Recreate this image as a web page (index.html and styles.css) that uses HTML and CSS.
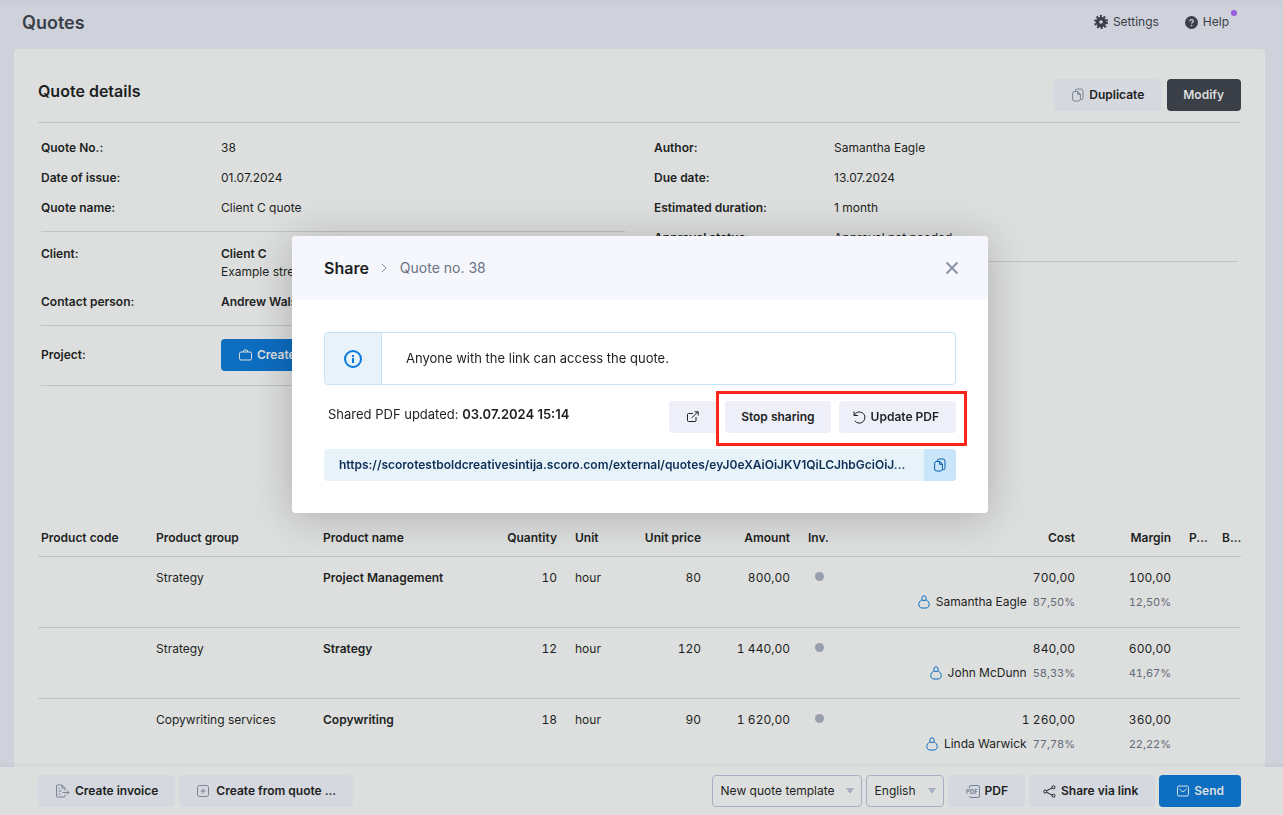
FILE: index.html
```html
<!DOCTYPE html>
<html lang="en">
<head>
  <meta charset="UTF-8" />
  <meta name="viewport" content="width=device-width, initial-scale=1.0"/>
  <title>Quotes</title>
  <link rel="stylesheet" href="styles.css">
</head>
<body>
  <!-- Shared icons -->
  <svg class="sprite" width="0" height="0" aria-hidden="true">
    <symbol id="icon-copy" viewBox="0 0 12 14">
      <path d="M3.500 3.500H5.800L8.400 6V11a2 2 0 0 1-2 2H2.600a2 2 0 0 1-2-2V5.500a2 2 0 0 1 2-2H4M5.600 3.700V6.400H8.300M3.200 3.300V3a2 2 0 0 1 2-2H9a2 2 0 0 1 2 2V9.800a2 2 0 0 1-2 2M5 3.300L8.500 6.500"/>
    </symbol>
    <symbol id="icon-person" viewBox="0 0 12 14">
      <path d="M4 4.800V2.800a2 2 0 0 1 4 0V4.800M4 4.800C2 5.800.8 7.600.8 9.400c0 2.400 1.400 3.600 3.200 3.600h4c1.800 0 3.200-1.200 3.200-3.600C11.200 7.600 10 5.800 8 4.800M4 4.800c.9 1 3.100 1 4 0"/>
    </symbol>
  </svg>

  <header class="topbar">
    <h1>Quotes</h1>
    <nav class="topnav">
      <a href="#settings">
        <svg width="14" height="14" viewBox="0 0 14 14"><circle cx="7" cy="7" r="3.500" fill="none" stroke="currentColor" stroke-width="3.400"/><circle cx="7" cy="7" r="6" fill="none" stroke="currentColor" stroke-width="2" stroke-dasharray="2.040 1.730"/></svg>
        Settings
      </a>
      <a href="#help" class="help">
        <svg width="13" height="13" viewBox="0 0 14 14"><circle cx="7" cy="7" r="7" fill="currentColor"/><path d="M5.200 5.600c0-2.400 3.700-2.300 3.700 0 0 1.300-1.800 1.300-1.800 2.600" fill="none" stroke="#d0d2dc" stroke-width="1.400"/><circle cx="7.100" cy="10.200" r=".9" fill="#d0d2dc"/></svg>
        Help
        <span class="dot"></span>
      </a>
    </nav>
  </header>

  <main class="card">
    <div class="card-head">
      <h2>Quote details</h2>
      <div class="actions">
        <button type="button" class="btn"><svg class="icon" width="12" height="14"><use href="#icon-copy"/></svg>Duplicate</button>
        <button type="button" class="btn btn-dark">Modify</button>
      </div>
    </div>

    <div class="details">
      <div>
        <dl class="group">
          <div class="row"><dt>Quote No.:</dt><dd>38</dd></div>
          <div class="row"><dt>Date of issue:</dt><dd>01.07.2024</dd></div>
          <div class="row"><dt>Quote name:</dt><dd>Client C quote</dd></div>
        </dl>
        <dl class="group">
          <div class="row"><dt>Client:</dt><dd><b>Client C</b><br>Example street</dd></div>
          <div class="row"><dt>Contact person:</dt><dd><b>Andrew Walsh</b></dd></div>
        </dl>
        <dl class="group project">
          <div class="row">
            <dt>Project:</dt>
            <dd>
              <button type="button" class="btn btn-blue">
                <svg class="icon" width="13" height="12" viewBox="0 0 13 12"><rect x=".5" y="3" width="12" height="8" rx="1.500"/><path d="M4.500 3V2a1 1 0 0 1 1-1h2a1 1 0 0 1 1 1V3"/></svg>Create project
              </button>
            </dd>
          </div>
        </dl>
      </div>
      <div>
        <dl class="group">
          <div class="row"><dt>Author:</dt><dd>Samantha Eagle</dd></div>
          <div class="row"><dt>Due date:</dt><dd>13.07.2024</dd></div>
          <div class="row"><dt>Estimated duration:</dt><dd>1 month</dd></div>
          <div class="row"><dt>Approval status:</dt><dd>Approval not needed</dd></div>
        </dl>
      </div>
    </div>

    <table class="products">
      <colgroup>
        <col class="c-code"><col class="c-group"><col class="c-name"><col class="c-qty"><col class="c-unit"><col class="c-price">
        <col class="c-amount"><col class="c-inv"><col><col class="c-margin"><col class="c-p"><col class="c-b">
      </colgroup>
      <thead>
        <tr>
          <th>Product code</th>
          <th>Product group</th>
          <th>Product name</th>
          <th class="num">Quantity</th>
          <th>Unit</th>
          <th class="num">Unit price</th>
          <th class="num">Amount</th>
          <th>Inv.</th>
          <th class="num">Cost</th>
          <th class="num">Margin</th>
          <th>P...</th>
          <th>B...</th>
        </tr>
      </thead>
      <tbody>
        <tr>
          <td></td>
          <td>Strategy</td>
          <td><b>Project Management</b></td>
          <td class="num">10</td>
          <td>hour</td>
          <td class="num">80</td>
          <td class="num">800,00</td>
          <td><span class="status"></span></td>
          <td class="num">700,00<div class="sub"><svg class="person" width="12" height="14"><use href="#icon-person"/></svg><span class="who">Samantha Eagle</span>87,50%</div></td>
          <td class="num">100,00<div class="sub">12,50%</div></td>
          <td></td>
          <td></td>
        </tr>
        <tr>
          <td></td>
          <td>Strategy</td>
          <td><b>Strategy</b></td>
          <td class="num">12</td>
          <td>hour</td>
          <td class="num">120</td>
          <td class="num">1 440,00</td>
          <td><span class="status"></span></td>
          <td class="num">840,00<div class="sub"><svg class="person" width="12" height="14"><use href="#icon-person"/></svg><span class="who">John McDunn</span>58,33%</div></td>
          <td class="num">600,00<div class="sub">41,67%</div></td>
          <td></td>
          <td></td>
        </tr>
        <tr>
          <td></td>
          <td>Copywriting services</td>
          <td><b>Copywriting</b></td>
          <td class="num">18</td>
          <td>hour</td>
          <td class="num">90</td>
          <td class="num">1 620,00</td>
          <td><span class="status"></span></td>
          <td class="num">1 260,00<div class="sub"><svg class="person" width="12" height="14"><use href="#icon-person"/></svg><span class="who">Linda Warwick</span>77,78%</div></td>
          <td class="num">360,00<div class="sub">22,22%</div></td>
          <td></td>
          <td></td>
        </tr>
      </tbody>
    </table>
  </main>

  <footer class="bottombar">
    <div class="tools">
      <button type="button" class="btn">
        <svg class="icon" width="14" height="14" viewBox="0 0 14 14"><path d="M9 10.500V12a1 1 0 0 1-1 1H1.500a1 1 0 0 1-1-1V2a1 1 0 0 1 1-1H6l3 3v2.500M6 1v3h3M2.500 4.500h1.500M2.500 7h3M2.500 10h2M6.500 8.500h6.500M11 6.500l2 2-2 2"/></svg>Create invoice
      </button>
      <button type="button" class="btn">
        <svg class="icon wide" width="12" height="12" viewBox="0 0 12 12"><rect x=".5" y=".5" width="11" height="11" rx="2"/><path d="M6 3.500v5M3.500 6h5"/></svg>Create from quote ...
      </button>
    </div>
    <div class="tools">
      <select class="select template" aria-label="Template"><option>New quote template</option></select>
      <select class="select language" aria-label="Language"><option>English</option></select>
      <button type="button" class="btn">
        <svg class="icon pdf" width="14" height="13" viewBox="0 0 14 13"><path d="M3.500 3V2A1.500 1.500 0 0 1 5 .5h7A1.500 1.500 0 0 1 13.500 2v9a1.500 1.500 0 0 1-1.500 1.500H5A1.500 1.500 0 0 1 3.500 11"/><text x="0" y="9">PDF</text></svg>PDF
      </button>
      <button type="button" class="btn btn-tight">
        <svg class="icon share" width="13" height="13" viewBox="0 0 13 13"><circle cx="2.200" cy="6.500" r="1.500"/><circle cx="10.500" cy="2.300" r="1.500"/><circle cx="10.500" cy="10.700" r="1.500"/><path d="M3.600 5.700l5.500-2.700M3.600 7.300l5.500 2.700"/></svg>Share via link
      </button>
      <button type="button" class="btn btn-blue">
        <svg class="icon" width="12" height="12" viewBox="0 0 12 12"><rect x=".5" y="1" width="11" height="10" rx="1.500"/><path d="M2.500 4L6 7l3.500-3"/></svg>Send
      </button>
    </div>
  </footer>

  <!-- Share dialog -->
  <div class="overlay">
    <section class="modal" role="dialog" aria-labelledby="shareTitle">
      <header class="modal-head">
        <h2 id="shareTitle">Share</h2>
        <svg class="chevron" width="6" height="10" viewBox="0 0 6 10"><path d="M1 1l4 4-4 4"/></svg>
        <span class="crumb">Quote no. 38</span>
        <button type="button" class="close" aria-label="Close"><svg width="14" height="14" viewBox="0 0 14 14"><path d="M1.500 1.500l11 11M12.500 1.500l-11 11"/></svg></button>
      </header>
      <div class="modal-body">
        <div class="info">
          <div class="info-icon">
            <svg width="18" height="18" viewBox="0 0 18 18"><circle cx="9" cy="9" r="8" fill="none" stroke="currentColor" stroke-width="2"/><path d="M8 8h2v5H8zM8 5h2v2H8z" fill="currentColor"/></svg>
          </div>
          <p>Anyone with the link can access the quote.</p>
        </div>
        <div class="share-row">
          <p>Shared PDF updated: <b>03.07.2024 15:14</b></p>
          <button type="button" class="btn btn-open" aria-label="Open link">
            <svg width="12" height="12" viewBox="0 0 12 12"><path d="M6 2.500H1.500a1 1 0 0 0-1 1V9.500a1 1 0 0 0 1 1H8a1 1 0 0 0 1-1V6M4.500 7L11 .8M7.500.8H11.200V4.500"/></svg>
          </button>
          <div class="highlight">
            <button type="button" class="btn">Stop sharing</button>
            <button type="button" class="btn btn-tight">
              <svg class="icon" width="13" height="13" viewBox="0 0 13 13"><path d="M1 .5V4.500H5M1.200 4.300A5.600 5.600 0 1 1 1.800 9.800"/></svg>Update PDF
            </button>
          </div>
        </div>
        <div class="link-row">
          <a href="#share-link">https://scorotestboldcreativesintija.scoro.com/external/quotes/eyJ0eXAiOiJKV1QiLCJhbGciOiJ...</a>
          <button type="button" class="copy" aria-label="Copy link"><svg width="12" height="14"><use href="#icon-copy"/></svg></button>
        </div>
      </div>
    </section>
  </div>
</body>
</html>
```
FILE: styles.css
```css
* {
  box-sizing: border-box;
  margin: 0;
  padding: 0;
}
body {
  display: flex;
  flex-direction: column;
  height: 100vh;
  overflow: hidden;
  background: linear-gradient(#c9cbd5, #cfd1db 10px);
  color: #1d1f23;
  font-family: Inter, sans-serif;
  font-size: 12px;
  line-height: 18px;
}
b, dt, th {
  font-weight: 600;
}
.sprite {
  position: absolute;
}

/* Top bar */
.topbar {
  display: flex;
  flex: none;
  justify-content: space-between;
  padding: 9px 54px 0 22px;
  height: 49px;
  color: #3a3f48;
}
.topbar h1 {
  font-size: 18px;
  font-weight: 600;
  line-height: 28px;
}
.topnav {
  display: flex;
  gap: 26px;
}
.topnav a {
  position: relative;
  display: flex;
  gap: 5px;
  align-items: center;
  height: 26px;
  color: inherit;
  text-decoration: none;
}
.dot {
  position: absolute;
  top: 1px;
  right: -8px;
  width: 6px;
  height: 6px;
  border-radius: 50%;
  background: #965fd9;
}

/* Buttons */
.btn {
  display: inline-flex;
  align-items: center;
  justify-content: center;
  gap: 5px;
  height: 32px;
  padding: 0 17px 0 16px;
  border: none;
  border-radius: 4px;
  background: #d5d8de;
  color: #1d1f23;
  font: 600 12px/18px Inter, sans-serif;
  white-space: nowrap;
  cursor: pointer;
}
.btn-dark {
  background: #3a3f48;
  color: #dddfde;
}
.btn-blue {
  background: #0d6dc1;
  color: #dddfde;
}
.btn-tight {
  padding-left: 12px;
}
.icon {
  fill: none;
  stroke: #7b8494;
  margin-left: 2px;
}
.btn-blue .icon {
  stroke: #dddfde;
}
.icon.wide {
  margin-right: 2px;
}

/* Quote card */
.card {
  flex: 1;
  min-height: 0;
  overflow: hidden;
  margin: 0 18px 0 14px;
  padding: 30px 24px 0;
  border-radius: 4px 4px 0 0;
  background: #dddfde;
}
.card-head {
  display: flex;
  justify-content: space-between;
  padding-bottom: 11px;
  border-bottom: 1px solid #bfc1ce;
}
.card-head h2 {
  font-size: 16px;
  font-weight: 600;
  line-height: 24px;
}
.actions {
  display: flex;
  gap: 6px;
}
.details {
  display: grid;
  grid-template-columns: 1fr 1fr;
  gap: 29px;
  padding: 10px 3px 0;
}
.group {
  padding-bottom: 8px;
  border-bottom: 1px solid #c0c2cc;
}
.group + .group {
  padding-top: 7px;
}
.row {
  display: flex;
  padding: 6px 0;
}
.row dt {
  flex: none;
  width: 180px;
}
.details .project {
  padding: 13px 0 14px;
}
.project .row {
  align-items: center;
  padding: 0;
}
.project dd {
  display: flex;
}

/* Products */
.products {
  width: 100%;
  margin-top: 134px;
  border-collapse: collapse;
  table-layout: fixed;
}
.c-code { width: 109px; }
.c-group { width: 167px; }
.c-name { width: 176px; }
.c-qty { width: 76px; }
.c-unit { width: 64px; }
.c-price { width: 80px; }
.c-amount { width: 89px; }
.c-inv { width: 41px; }
.c-margin { width: 96px; }
.c-p { width: 34px; }
.c-b { width: 27px; }
.products th,
.products td {
  padding: 0 9px;
  text-align: left;
  vertical-align: top;
  white-space: nowrap;
}
.products th {
  height: 36px;
  padding-top: 9px;
  border-bottom: 1px solid #bcc2ce;
}
.products th:first-child {
  padding-left: 3px;
}
.products th:last-child {
  padding: 9px 0 0 8px;
}
.products td {
  height: 71px;
  padding-top: 12px;
  border-bottom: 1px solid #c2c4c9;
}
.products .num {
  text-align: right;
}
.products td.num {
  font-feature-settings: "tnum";
}
.sub {
  display: flex;
  align-items: center;
  justify-content: flex-end;
  margin-top: 6px;
  color: #636a78;
  font-size: 11px;
}
.who {
  margin: 0 6px;
  color: #1d1f23;
  font-size: 12px;
}
.person {
  fill: none;
  stroke: #0d6dc1;
}
.status {
  display: block;
  width: 9px;
  height: 9px;
  margin: 3px 0 0 7px;
  border-radius: 50%;
  background: #989eac;
}

/* Bottom bar */
.bottombar {
  display: flex;
  flex: none;
  justify-content: space-between;
  padding: 8px 42px 8px 38px;
  background: #dddfde;
  box-shadow: 0 -1px 6px rgba(0, 0, 0, 0.05);
}
.tools {
  display: flex;
  gap: 4px;
}
.select {
  height: 32px;
  padding: 0 8px;
  border: 1px solid #a9afc2;
  border-radius: 4px;
  appearance: none;
  background: conic-gradient(from -34deg at 50% 100%, #a9afc2 68deg, transparent 0) no-repeat right 7px center / 8px 6px;
  color: #1d1f23;
  font: 12px/18px Inter, sans-serif;
}
.template {
  width: 150px;
}
.language {
  width: 78px;
}
.pdf text {
  fill: #7b8494;
  stroke: none;
  font: 700 6px Inter, sans-serif;
}
.icon.share {
  stroke: #1d1f23;
}

/* Share dialog */
.overlay {
  position: fixed;
  inset: 0;
  display: flex;
  align-items: flex-start;
  justify-content: center;
  padding: 236px 3px 0 0;
}
.modal {
  width: 696px;
  border-radius: 4px;
  background: #fff;
  box-shadow: 0 4px 40px rgba(0, 0, 0, 0.22);
}
.modal-head {
  display: flex;
  align-items: center;
  height: 64px;
  padding: 0 29px 0 32px;
  border-radius: 4px 4px 0 0;
  background: #f6f7fc;
}
.modal-head h2 {
  font-size: 16px;
  font-weight: 600;
}
.chevron {
  margin: 0 13px 0 12px;
  fill: none;
  stroke: #8a92a3;
}
.crumb {
  color: #6b7385;
  font-size: 14px;
}
.close {
  display: flex;
  margin-left: auto;
  border: none;
  background: none;
  cursor: pointer;
}
.close svg {
  fill: none;
  stroke: #8a92a6;
  stroke-width: 2;
}
.modal-body {
  padding: 32px;
  font-size: 13px;
}
.modal .btn {
  background: #eeeff9;
}
.modal .btn svg {
  fill: none;
  stroke: #1d1f23;
}
.info {
  display: flex;
  height: 53px;
  overflow: hidden;
  border: 1px solid #c5e4f7;
  border-radius: 4px;
}
.info-icon {
  display: flex;
  align-items: center;
  justify-content: center;
  width: 57px;
  border-right: 1px solid #c5e4f7;
  background: #e7f2f9;
  color: #0a78dc;
}
.info p {
  padding-left: 24px;
  line-height: 51px;
}
.share-row {
  display: flex;
  margin: 16px 0;
}
.share-row p {
  flex: 1;
  padding-left: 4px;
  line-height: 26px;
}
.btn-open {
  width: 48px;
  margin-right: 8px;
}
.highlight {
  position: relative;
  display: flex;
  gap: 8px;
}
.highlight .btn:first-child {
  padding: 0 16px;
}
.highlight::after {
  content: "";
  position: absolute;
  inset: -10px -11px -13px -9px;
  border: 3px solid #fc2519;
  pointer-events: none;
}
.link-row {
  display: flex;
  overflow: hidden;
  height: 32px;
  border-radius: 4px;
  background: #e7f2f9;
}
.link-row a {
  flex: 1;
  min-width: 0;
  padding: 0 15px;
  overflow: hidden;
  color: #0d2f55;
  font-size: 12px;
  font-weight: 600;
  line-height: 32px;
  text-decoration: none;
  white-space: nowrap;
}
.copy {
  display: flex;
  align-items: center;
  justify-content: center;
  width: 32px;
  border: none;
  background: #c8e5f9;
  cursor: pointer;
}
.copy svg {
  fill: none;
  stroke: #0a5cab;
}
```
